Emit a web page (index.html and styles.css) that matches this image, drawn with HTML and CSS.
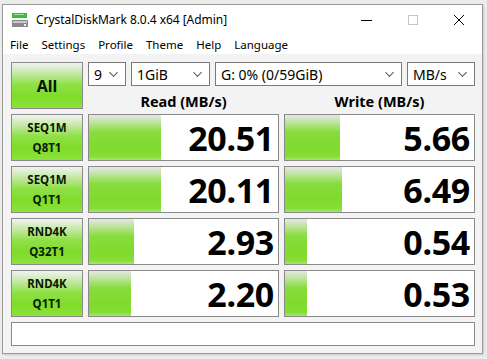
FILE: index.html
```html
<!DOCTYPE html>
<html>
<head>
<meta charset="utf-8">
<link rel="stylesheet" href="styles.css">
</head>
<body>
<div class="screen">
  <div class="window">
    <div class="titlebar">
      <svg class="appicon" width="18" height="18" viewBox="0 0 18 18">
        <rect x="1" y="2" width="15" height="5" fill="#3cb83c"/>
        <rect x="3" y="3" width="10" height="1" fill="#9be89b"/>
        <rect x="1" y="9" width="16" height="7" fill="#8a8a8a"/>
        <rect x="2" y="10" width="14" height="2" fill="#c8c8c8"/>
        <rect x="13" y="13" width="2" height="2" fill="#f0f0f0"/>
      </svg>
      <span class="title">CrystalDiskMark 8.0.4 x64 [Admin]</span>
      <div class="controls">
        <span class="ctl"><svg width="12" height="12" viewBox="0 0 12 12"><line x1="0" y1="6.5" x2="11" y2="6.5" stroke="#000" stroke-width="1"/></svg></span>
        <span class="ctl"><svg width="12" height="12" viewBox="0 0 12 12"><rect x="1.5" y="1.5" width="9" height="9" fill="none" stroke="#c4c4c4" stroke-width="1"/></svg></span>
        <span class="ctl"><svg width="12" height="12" viewBox="0 0 12 12"><path d="M1 1 L11 11 M11 1 L1 11" stroke="#000" stroke-width="1"/></svg></span>
      </div>
    </div>
    <div class="menubar">
      <span>File</span><span>Settings</span><span>Profile</span><span>Theme</span><span>Help</span><span>Language</span>
    </div>
    <div class="content">
      <div class="btn all">All</div>
      <div class="topright">
        <div class="combos">
          <div class="combo c-count"><span>9</span><i></i></div>
          <div class="combo c-size"><span>1GiB</span><i></i></div>
          <div class="combo c-drive"><span>G: 0% (0/59GiB)</span><i></i></div>
          <div class="combo c-unit"><span>MB/s</span><i></i></div>
        </div>
        <div class="headers">
          <div class="hdr">Read (MB/s)</div>
          <div class="hdr">Write (MB/s)</div>
        </div>
      </div>

      <div class="btn label">SEQ1M<br>Q8T1</div>
      <div class="cell"><div class="bar" style="width:38%"></div><span class="val">20.51</span></div>
      <div class="cell"><div class="bar" style="width:29%"></div><span class="val">5.66</span></div>

      <div class="btn label">SEQ1M<br>Q1T1</div>
      <div class="cell"><div class="bar" style="width:38%"></div><span class="val">20.11</span></div>
      <div class="cell"><div class="bar" style="width:30%"></div><span class="val">6.49</span></div>

      <div class="btn label">RND4K<br>Q32T1</div>
      <div class="cell"><div class="bar" style="width:24%"></div><span class="val">2.93</span></div>
      <div class="cell"><div class="bar" style="width:11.5%"></div><span class="val">0.54</span></div>

      <div class="btn label">RND4K<br>Q1T1</div>
      <div class="cell"><div class="bar" style="width:22%"></div><span class="val">2.20</span></div>
      <div class="cell"><div class="bar" style="width:11.5%"></div><span class="val">0.53</span></div>

      <div class="status"></div>
    </div>
  </div>
</div>
</body>
</html>
```
FILE: styles.css
```css
html, body {
  margin: 0;
  padding: 0;
  background: #ececec;
}
body {
  font-family: "Noto Sans", "Open Sans", sans-serif;
  width: 487px;
  height: 359px;
  overflow: hidden;
}
.screen {
  padding: 4px 0 0 2px;
}
.window {
  width: 479px;
  height: 348px;
  border: 1px solid #9a9a9a;
  background: #f3f3f3;
  box-shadow: 1px 1px 2px rgba(0,0,0,0.15);
}
.titlebar {
  height: 29px;
  background: #fff;
  display: flex;
  align-items: center;
}
.appicon {
  margin-left: 8px;
  margin-right: 7px;
}
.title {
  font-size: 12px;
  color: #000;
  letter-spacing: -0.05px;
}
.controls {
  margin-left: auto;
  display: flex;
  height: 29px;
}
.ctl {
  width: 46px;
  display: flex;
  align-items: center;
  justify-content: center;
}
.menubar {
  height: 20px;
  background: #fff;
  display: flex;
  align-items: center;
  padding-left: 7px;
  font-size: 11.5px;
  gap: 13px;
}
.content {
  display: grid;
  grid-template-columns: 72px 191px 191px;
  grid-template-rows: 47px 47px 47px 47px 47px 24px;
  column-gap: 5px;
  row-gap: 5px;
  padding: 8px 0 0 8px;
}
.btn {
  box-sizing: border-box;
  border: 1px solid #8a8a8a;
  background: linear-gradient(to bottom, #f2f2f2 0%, #c6e9a8 22%, #8fe046 48%, #7fdc2a 75%, #8ce23c 100%);
  display: flex;
  align-items: center;
  justify-content: center;
  text-align: center;
  font-weight: bold;
  color: #0a1a00;
}
.all {
  font-size: 16px;
}
.label {
  font-size: 11.5px;
  line-height: 20px;
  padding-top: 1px;
}
.topright {
  grid-column: 2 / 4;
  display: flex;
  flex-direction: column;
}
.combos {
  display: flex;
  height: 24px;
  gap: 5px;
}
.combo {
  box-sizing: border-box;
  height: 24px;
  border: 1px solid #7a7a7a;
  background: #fff;
  display: flex;
  align-items: center;
  font-size: 14px;
  padding-left: 5px;
  position: relative;
}
.combo span {
  flex: 1;
  white-space: nowrap;
}
.combo i {
  width: 6px;
  height: 6px;
  border-right: 1px solid #555;
  border-bottom: 1px solid #555;
  transform: rotate(45deg) scale(0.9, 0.9);
  margin: 0 8px 4px 6px;
}
.c-count { width: 38px; }
.c-size { width: 79px; }
.c-drive { width: 187px; }
.c-unit { width: 68px; }
.headers {
  display: flex;
  gap: 5px;
  flex: 1;
}
.hdr {
  width: 191px;
  text-align: center;
  font-weight: bold;
  font-size: 14.5px;
  line-height: 23px;
  padding-top: 4px;
  color: #000;
}
.cell {
  box-sizing: border-box;
  border: 1px solid #8a8a8a;
  background: #fff;
  position: relative;
  display: flex;
  align-items: center;
  justify-content: flex-end;
}
.bar {
  position: absolute;
  left: 0;
  top: 0;
  bottom: 0;
  background: linear-gradient(to bottom, #e6e6e6 0%, #b9e494 18%, #88dc3c 38%, #80da2e 70%, #86dd34 92%, #a6e672 100%);
}
.val {
  position: relative;
  font-size: 34px;
  font-weight: bold;
  color: #000;
  padding-right: 4px;
  letter-spacing: -0.3px;
  line-height: 1;
}
.status {
  grid-column: 1 / 4;
  box-sizing: border-box;
  border: 1px solid #8a8a8a;
  background: #fff;
}
```
